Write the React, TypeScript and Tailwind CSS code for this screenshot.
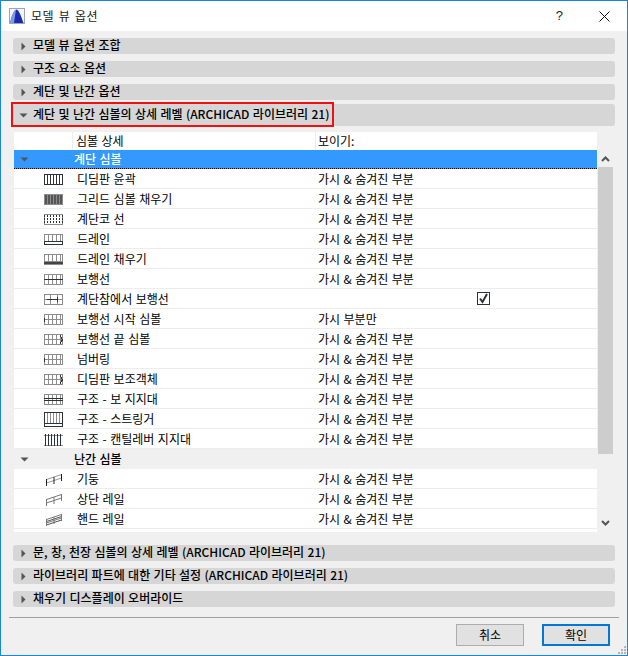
import { FC } from 'react'

type IconKind =
  | 'outline' | 'grid' | 'nosing' | 'drain' | 'drainFill' | 'walk' | 'landing' | 'walkStart' | 'walkEnd'
  | 'beam' | 'stringer' | 'cantilever' | 'post' | 'topRail' | 'handRail'

interface SymbolRow {
  label: string
  icon: IconKind
  value?: string
  checked?: boolean
}

const FULL = '가시 & 숨겨진 부분'

const stairRows: SymbolRow[] = [
  { label: '디딤판 윤곽', icon: 'outline', value: FULL },
  { label: '그리드 심볼 채우기', icon: 'grid', value: FULL },
  { label: '계단코 선', icon: 'nosing', value: FULL },
  { label: '드레인', icon: 'drain', value: FULL },
  { label: '드레인 채우기', icon: 'drainFill', value: FULL },
  { label: '보행선', icon: 'walk', value: FULL },
  { label: '계단참에서 보행선', icon: 'landing', checked: true },
  { label: '보행선 시작 심볼', icon: 'walkStart', value: '가시 부분만' },
  { label: '보행선 끝 심볼', icon: 'walkEnd', value: FULL },
  { label: '넘버링', icon: 'walkStart', value: FULL },
  { label: '디딤판 보조객체', icon: 'walkEnd', value: FULL },
  { label: '구조 - 보 지지대', icon: 'beam', value: FULL },
  { label: '구조 - 스트링거', icon: 'stringer', value: FULL },
  { label: '구조 - 캔틸레버 지지대', icon: 'cantilever', value: FULL },
]

const railRows: SymbolRow[] = [
  { label: '기둥', icon: 'post', value: FULL },
  { label: '상단 레일', icon: 'topRail', value: FULL },
  { label: '핸드 레일', icon: 'handRail', value: FULL },
]

const Caret: FC<{ open?: boolean }> = ({ open }) => (
  <svg width="9" height="9" viewBox="0 0 9 9" className="shrink-0 text-[#555555]" fill="currentColor">
    {open ? <path d="M0.5 2.5h8L4.5 6.5z" /> : <path d="M2.5 0.5v8L6.5 4.5z" />}
  </svg>
)

const Bar: FC<{ label: string; open?: boolean; highlighted?: boolean }> = ({ label, open, highlighted }) => (
  <div
    className={
      highlighted
        ? 'relative flex h-[22px] items-center rounded-[3px] bg-[#d6d6d6] pl-[6px]'
        : 'flex h-[16px] items-center rounded-[3px] bg-[#d6d6d6] pl-[6px]'
    }
  >
    <Caret open={open} />
    <span className="mb-[2px] ml-[5px] text-[12px] leading-none font-medium whitespace-nowrap text-black [word-spacing:0.7px]">
      {label}
    </span>
    {highlighted && (
      <div className="absolute top-[-2px] left-[-2px] h-[25px] w-[323px] border-2 border-[#f01010]" />
    )}
  </div>
)

const RowIcon: FC<{ kind: IconKind }> = ({ kind }) => {
  if (kind === 'post' || kind === 'topRail' || kind === 'handRail') {
    const stroke = kind === 'post' ? '#9a9a9a' : '#777777'
    return (
      <svg width="18" height="14" viewBox="0 0 18 14" fill="none" strokeWidth="1" className="shrink-0">
        <path d="M1.5 6.5L16.5 1.5M1.5 10L16.5 5" stroke={stroke} />
        {kind === 'handRail' && <path d="M1.5 8.5L16.5 3.5M1.5 12L16.5 7" stroke="#555555" />}
        <path d="M1.5 6v7" stroke={kind === 'post' ? '#222222' : stroke} />
        <path d="M9 4v7M16.5 1v7" stroke={kind === 'post' ? '#222222' : stroke} />
      </svg>
    )
  }

  const dark = '#2b3338'
  const grey = '#8c8c8c'
  const treads = [0.5, 4.5, 8.5, 12.5, 16.5]
  const narrow = [3.5, 6.5, 9.5, 12.5, 15.5]

  if (kind === 'stringer') {
    return (
      <svg width="19" height="15" viewBox="0 0 19 15" fill="none" strokeWidth="1" className="shrink-0" shapeRendering="crispEdges">
        {narrow.map((x) => <path key={x} d={`M${x} 1v10`} stroke={grey} />)}
        <path d="M0 0.5h19M0.5 0v11M18.5 0v11" stroke={dark} />
        <rect x="0.5" y="11.5" width="18" height="3" stroke={dark} />
      </svg>
    )
  }

  if (kind === 'cantilever') {
    return (
      <svg width="19" height="12" viewBox="0 0 19 12" fill="none" strokeWidth="1" className="shrink-0" shapeRendering="crispEdges">
        <path d="M0 1.5h19M0 11.5h19" stroke={grey} />
        {[1.5, 4.5, 7.5, 10.5, 13.5, 16.5].map((x) => <path key={x} d={`M${x} 0v12`} stroke={dark} />)}
      </svg>
    )
  }

  return (
    <svg width="19" height="11" viewBox="0 0 19 11" fill="none" strokeWidth="1" className="shrink-0" shapeRendering="crispEdges">
      {kind === 'outline' && (
        <>
          <rect x="0.5" y="0.5" width="18" height="10" stroke={dark} />
          {narrow.map((x) => <path key={x} d={`M${x} 1v9`} stroke={dark} />)}
        </>
      )}
      {kind === 'grid' && (
        <>
          <rect x="0.5" y="0.5" width="18" height="10" fill="#555555" stroke={grey} />
          {narrow.map((x) => <path key={x} d={`M${x} 1v9`} stroke={grey} />)}
        </>
      )}
      {kind === 'nosing' && (
        <>
          <rect x="0.5" y="0.5" width="18" height="10" stroke={grey} />
          {narrow.map((x) => <path key={x} d={`M${x} 1v9`} stroke={dark} strokeDasharray="2 1" />)}
          <path d="M0.5 1v9M18.5 1v9" stroke={dark} strokeDasharray="2 1" />
        </>
      )}
      {(kind === 'drain' || kind === 'drainFill') && (
        <>
          <path d="M0.5 10V0.5h18V10" stroke={grey} />
          {treads.map((x) => <path key={x} d={`M${x} 1v6`} stroke={grey} />)}
          {kind === 'drain' ? (
            <rect x="0.5" y="7.5" width="18" height="3" stroke={dark} />
          ) : (
            <>
              <rect x="0" y="7" width="19" height="4" fill={grey} />
              <rect x="0" y="8" width="19" height="2" fill="#444444" />
            </>
          )}
        </>
      )}
      {(kind === 'walk' || kind === 'landing' || kind === 'walkStart' || kind === 'walkEnd') && (
        <>
          <rect x="0.5" y="0.5" width="18" height="10" stroke={grey} />
          {(kind === 'landing' ? [6.5, 13.5] : treads).map((x) => <path key={x} d={`M${x} 1v9`} stroke={grey} />)}
          <path d="M1 5.5h17" stroke={grey} />
          {kind === 'walk' && <path d="M0 5.5h19" stroke={dark} />}
          {kind === 'landing' && <path d="M3 5.5h10M13.5 3v5" stroke={dark} />}
          {kind === 'walkStart' && <path d="M0.5 3.5v4" stroke={dark} />}
          {kind === 'walkEnd' && <path d="M16 1l2.5 4.5L16 10" stroke={dark} />}
        </>
      )}
      {kind === 'beam' && (
        <>
          <rect x="0.5" y="0.5" width="18" height="10" stroke={grey} />
          {treads.map((x) => <path key={x} d={`M${x} 1v9`} stroke={grey} />)}
          <path d="M0 4.5h19M0 6.5h19" stroke={dark} />
        </>
      )}
    </svg>
  )
}

const Row: FC<{ row: SymbolRow }> = ({ row }) => (
  <div className="flex h-[20px] items-center border-b border-[#ededed] bg-white text-[12px] text-black [word-spacing:0.8px]">
    <div className="flex w-[59px] shrink-0 justify-end pt-[2px] pr-[10px]">
      <RowIcon kind={row.icon} />
    </div>
    <div className="w-[243px] shrink-0 pl-[4px] whitespace-nowrap">{row.label}</div>
    <div className="flex-1 pl-[2px] whitespace-nowrap">
      {row.checked ? (
        <div className="ml-[159px] flex h-[13px] w-[13px] items-center justify-center border border-[#2b3338] bg-white">
          <svg width="11" height="11" viewBox="0 0 11 11" fill="none" stroke="#2b3338" strokeWidth="2">
            <path d="M2 5.5l2.5 3.5L9 1" />
          </svg>
        </div>
      ) : (
        row.value
      )}
    </div>
  </div>
)

const App: FC = () => (
  <div
    className="flex h-[656px] w-[628px] flex-col overflow-hidden border border-[#1a86d9] bg-[#f0f0f0]"
    style={{ fontFamily: '"Noto Sans CJK KR", "Liberation Sans", sans-serif' }}
  >
    {/* title bar */}
    <div className="flex h-[30px] shrink-0 items-center bg-white pl-[8px]">
      <svg width="16" height="16" viewBox="0 0 16 16" className="shrink-0">
        <rect x="0.5" y="0.5" width="15" height="15" fill="#f4f6fb" stroke="#9aa3c4" />
        <path d="M1 15C3 7 5 2 7.5 1.5C10 2 12 8 14.5 15z" fill="#1b2bb0" />
        <path d="M1 15C3 7 5 2 7 1.5L5 15z" fill="#7f9be8" />
      </svg>
      <span className="ml-[6px] text-[12px] tracking-[0.5px] text-[#222222] [word-spacing:1.5px]">모델 뷰 옵션</span>
      <span className="ml-auto text-[13px] text-[#222222]" style={{ fontFamily: '"Liberation Sans", sans-serif' }}>?</span>
      <svg width="11" height="11" viewBox="0 0 11 11" className="mr-[17px] ml-[36px]" stroke="#111111" strokeWidth="1" fill="none">
        <path d="M0.5 0.5l10 10M10.5 0.5l-10 10" />
      </svg>
    </div>

    {/* option sections */}
    <div className="flex flex-col px-[12px] pt-[7px]">
      <div className="flex flex-col gap-[7px]">
        <Bar label="모델 뷰 옵션 조합" />
        <Bar label="구조 요소 옵션" />
        <Bar label="계단 및 난간 옵션" />
      </div>
      <div className="mt-[4px]">
        <Bar label="계단 및 난간 심볼의 상세 레벨 (ARCHICAD 라이브러리 21)" open highlighted />
      </div>

      {/* symbol table */}
      <div className="mt-[6px] flex h-[400px] items-stretch">
        <div className="ml-[1px] flex w-[583px] flex-col bg-white">
          <div className="flex h-[18px] shrink-0 text-[12px] leading-[18px] text-black [word-spacing:0.8px]">
            <div className="w-[59px] border-r border-[#ededed]" />
            <div className="w-[243px] border-r border-[#ededed] pl-[3px]">심볼 상세</div>
            <div className="pl-[2px]">보이기:</div>
          </div>
          <div className="flex h-[19px] shrink-0 items-center border-b border-dotted border-black bg-[#3399ff] pl-[6px] text-[12px] font-medium text-white [word-spacing:0.8px]">
            <Caret open />
            <span className="ml-[45px]">계단 심볼</span>
          </div>
          {stairRows.map((row) => <Row key={row.label} row={row} />)}
          <div className="flex h-[20px] shrink-0 items-center bg-[#f0f0f0] pl-[6px] text-[12px] font-medium text-black [word-spacing:0.8px]">
            <Caret open />
            <span className="ml-[45px]">난간 심볼</span>
          </div>
          {railRows.map((row) => <Row key={row.label} row={row} />)}
        </div>

        {/* scrollbar */}
        <div className="ml-[1px] flex w-[15px] flex-col items-center">
          <svg width="9" height="6" viewBox="0 0 9 6" fill="none" stroke="#555555" strokeWidth="2" className="mt-[24px]">
            <path d="M1 5l3.5-3.5L8 5" />
          </svg>
          <div className="mt-[5px] h-[287px] w-full bg-[#cdcdcd]" />
          <svg width="9" height="6" viewBox="0 0 9 6" fill="none" stroke="#555555" strokeWidth="2" className="mt-[66px]">
            <path d="M1 1l3.5 3.5L8 1" />
          </svg>
        </div>
      </div>

      <div className="mt-[13px] flex flex-col gap-[7px]">
        <Bar label="문, 창, 천장 심볼의 상세 레벨 (ARCHICAD 라이브러리 21)" />
        <Bar label="라이브러리 파트에 대한 기타 설정 (ARCHICAD 라이브러리 21)" />
        <Bar label="채우기 디스플레이 오버라이드" />
      </div>
    </div>

    {/* footer */}
    <div className="mx-[8px] mt-[10px] h-px bg-[#a0a0a0]" />
    <div className="relative flex flex-1 justify-end gap-[18px] pt-[6px] pr-[17px]">
      <button className="h-[22px] w-[68px] border border-[#adadad] bg-[#e1e1e1] text-[12px] leading-none text-black">취소</button>
      <button className="h-[22px] w-[68px] border-2 border-[#0078d7] bg-[#e1e1e1] text-[12px] leading-none text-black">확인</button>
      <svg width="10" height="10" viewBox="0 0 10 10" fill="#b4b4b4" className="absolute right-0 bottom-0">
        <rect x="7" y="1" width="2" height="2" />
        <rect x="4" y="4" width="2" height="2" />
        <rect x="7" y="4" width="2" height="2" />
        <rect x="1" y="7" width="2" height="2" />
        <rect x="4" y="7" width="2" height="2" />
        <rect x="7" y="7" width="2" height="2" />
      </svg>
    </div>
  </div>
)

export default App
